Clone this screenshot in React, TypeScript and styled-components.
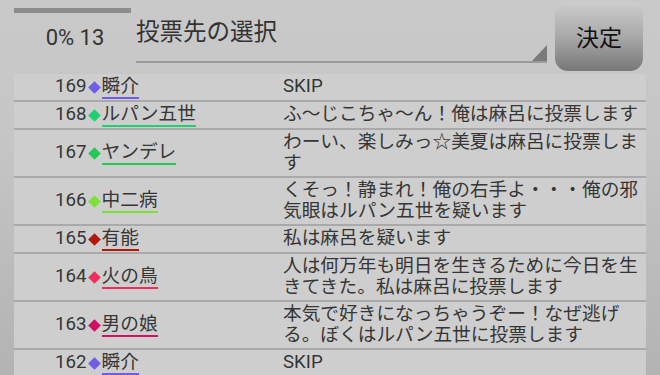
import React from 'react';
import styled, { createGlobalStyle } from 'styled-components';

interface Vote {
  no: number;
  name: string;
  color: string;
  message: string;
}

const votes: Vote[] = [
  { no: 169, name: '瞬介', color: '#6f5ce8', message: 'SKIP' },
  { no: 168, name: 'ルパン五世', color: '#1fd072', message: 'ふ～じこちゃ～ん！俺は麻呂に投票します' },
  { no: 167, name: 'ヤンデレ', color: '#22c95a', message: 'わーい、楽しみっ☆美夏は麻呂に投票します' },
  { no: 166, name: '中二病', color: '#7fe03a', message: 'くそっ！静まれ！俺の右手よ・・・俺の邪気眼はルパン五世を疑います' },
  { no: 165, name: '有能', color: '#b01a0e', message: '私は麻呂を疑います' },
  { no: 164, name: '火の鳥', color: '#ea2f5e', message: '人は何万年も明日を生きるために今日を生きてきた。私は麻呂に投票します' },
  { no: 163, name: '男の娘', color: '#d01063', message: '本気で好きになっちゃうぞー！なぜ逃げる。ぼくはルパン五世に投票します' },
  { no: 162, name: '瞬介', color: '#6f5ce8', message: 'SKIP' },
];

const GlobalStyle = createGlobalStyle`
  html, body {
    margin: 0;
    padding: 0;
  }
  body {
    font-family: Roboto, "Noto Sans CJK JP", sans-serif;
  }
`;

const Screen = styled.div`
  width: 660px;
  height: 375px;
  overflow: hidden;
  background: linear-gradient(to bottom, #c9c9c9 0%, #c6c6c6 35%, #b3b3b3 100%);
  color: #363636;
`;

const Header = styled.div`
  display: flex;
  align-items: flex-start;
  height: 74px;
  padding-left: 14px;
  box-sizing: border-box;
`;

const Progress = styled.div`
  width: 122px;
  display: flex;
  flex-direction: column;
  align-items: center;
  padding-top: 8px;
`;

const ProgressBar = styled.div`
  width: 117px;
  height: 5px;
  align-self: flex-start;
  background: #8c8c8c;
`;

const ProgressLabel = styled.div`
  margin-top: 12px;
  font-size: 22px;
  line-height: 25px;
  color: #333;
`;

const TitleBox = styled.div`
  position: relative;
  flex: 1;
  height: 63px;
  box-sizing: border-box;
  padding-top: 18px;
  border-bottom: 2px solid #9a9a9a;
  font-size: 23.5px;
  line-height: 28px;
  color: #333;
`;

const Corner = styled.div`
  position: absolute;
  right: 0;
  bottom: 0;
  width: 0;
  height: 0;
  border-left: 15px solid transparent;
  border-bottom: 16px solid #7a7a7a;
`;

const DecideButton = styled.button`
  width: 88px;
  height: 69px;
  margin: 2px 17px 0 8px;
  border: none;
  border-radius: 13px;
  background: linear-gradient(to bottom, #cdcdcd 0%, #a9a9a9 50%, #777 100%);
  font-family: Roboto, "Noto Sans CJK JP", sans-serif;
  font-size: 23px;
  color: #111;
  padding: 0 0 2px;
`;

const List = styled.div`
  margin-left: 14px;
  width: 632px;
`;

const Row = styled.div`
  display: grid;
  grid-template-columns: 269px 1fr;
  align-items: center;
  min-height: 23px;
  background: #cecece;
  border-bottom: 2px solid #a9a9a9;
  padding: 1.5px 0;
  font-size: 18.7px;
  line-height: 21.5px;
`;

const Who = styled.div`
  display: flex;
  align-items: center;
  padding-left: 41px;
`;

const Diamond = styled.span<{ $color: string }>`
  flex: none;
  width: 9px;
  height: 9px;
  margin: 0 3px 0 3px;
  background: ${(p) => p.$color};
  transform: rotate(45deg);
`;

const Name = styled.span<{ $color: string }>`
  border-bottom: 2px solid ${(p) => p.$color};
  line-height: 21px;
`;

const Message = styled.div`
  padding-right: 6px;
`;

const App: React.FC = () => {
  return (
    <Screen lang="ja">
      <GlobalStyle />
      <Header>
        <Progress>
          <ProgressBar />
          <ProgressLabel>0% 13</ProgressLabel>
        </Progress>
        <TitleBox>
          投票先の選択
          <Corner />
        </TitleBox>
        <DecideButton>決定</DecideButton>
      </Header>
      <List>
        {votes.map((v) => (
          <Row key={v.no}>
            <Who>
              {v.no}
              <Diamond $color={v.color} />
              <Name $color={v.color}>{v.name}</Name>
            </Who>
            <Message>{v.message}</Message>
          </Row>
        ))}
        <Row />
      </List>
    </Screen>
  );
};

export default App;
